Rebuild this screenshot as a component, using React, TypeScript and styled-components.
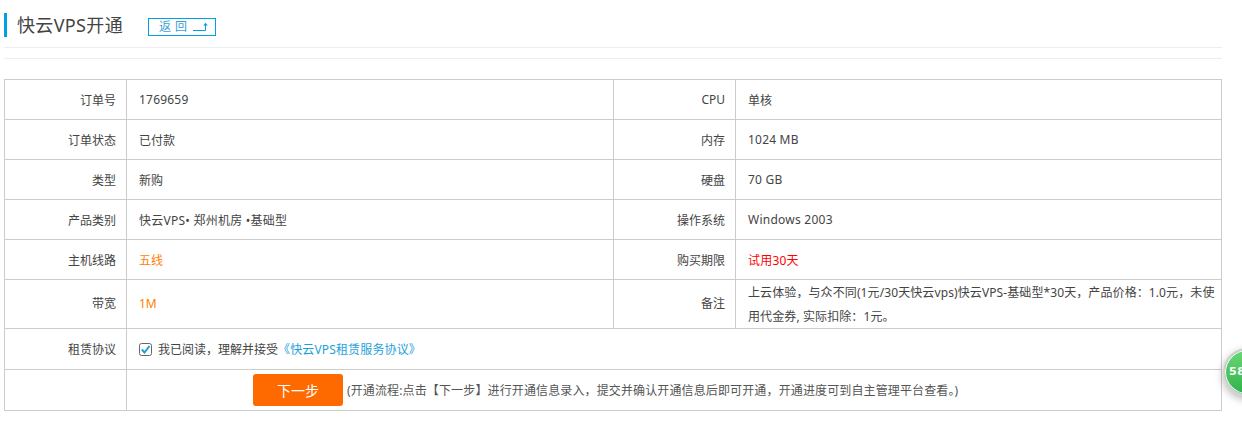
import React from "react";
import styled, { createGlobalStyle } from "styled-components";

const Global = createGlobalStyle`
  html, body { margin: 0; padding: 0; background: #fff; }
  body { font-family: "Noto Sans", "Noto Sans CJK SC", sans-serif; font-size: 12px; color: #444; overflow: hidden; }
`;

const Page = styled.div`
  position: relative;
  width: 1242px;
  height: 437px;
  overflow: hidden;
  padding: 13px 20px 0 4px;
  box-sizing: border-box;
`;

const Header = styled.div`
  display: flex;
  align-items: center;
  height: 24px;
  border-left: 3px solid #00a0e9;
  padding-left: 10px;
`;

const Title = styled.h1`
  margin: 0;
  font-size: 18px;
  font-weight: 400;
  line-height: 24px;
  color: #444;
  letter-spacing: 0.35px;
`;

const BackLink = styled.a`
  display: flex;
  align-items: center;
  box-sizing: border-box;
  width: 68px;
  height: 18px;
  margin: 3px 0 0 25px;
  padding-left: 10px;
  border: 1px solid #00a0e9;
  color: #3a9fd8;
  font-size: 12px;
  letter-spacing: 4px;
  line-height: 16px;
`;

const BackIcon = styled.svg`
  width: 16px;
  height: 10px;
  margin-left: 1px;
  flex: none;
`;

const Rule = styled.div<{ $top: number }>`
  height: 1px;
  background: #eee;
  margin-top: ${(p) => p.$top}px;
`;

const Table = styled.table`
  width: 1217px;
  margin-top: 20px;
  border-collapse: collapse;
  table-layout: fixed;
  border: 1px solid #ccc;
`;

const Row = styled.tr<{ $h: number }>`
  height: ${(p) => p.$h}px;
`;

const Label = styled.td<{ $lift?: boolean }>`
  box-sizing: border-box;
  border: 1px solid #ccc;
  text-align: right;
  padding: 0 10px ${(p) => (p.$lift ? 2 : 0)}px 0;
  color: #444;
`;

const Value = styled.td<{ $color?: string; $spacing?: number; $lift?: boolean }>`
  box-sizing: border-box;
  border: 1px solid #ccc;
  padding: 0 0 ${(p) => (p.$lift ? 2 : 0)}px 12px;
  color: ${(p) => p.$color ?? "#444"};
  letter-spacing: ${(p) => p.$spacing ?? 0}px;
`;

const Note = styled.div`
  line-height: 24px;
  padding: 1px 2px 0 0;
  margin-bottom: -1px;
  letter-spacing: 0.1px;
`;

const Agreement = styled.label`
  display: flex;
  align-items: center;
  gap: 6px;
`;

const Check = styled.svg`
  width: 13px;
  height: 13px;
  flex: none;
  margin-top: 1px;
`;

const Link = styled.a`
  color: #1e9fd8;
  letter-spacing: 0.15px;
`;

const ActionCell = styled.div`
  display: flex;
  align-items: center;
  padding-left: 114px;
`;

const NextButton = styled.button`
  width: 90px;
  height: 32px;
  border: 0;
  border-radius: 3px;
  background: #ff6a00;
  color: #fff;
  font: inherit;
  font-size: 14px;
  padding: 0;
`;

const Hint = styled.span`
  margin-left: 4px;
  color: #555;
  letter-spacing: 0.13px;
`;

const Bubble = styled.div`
  position: absolute;
  left: 1223px;
  top: 348px;
  width: 48px;
  height: 48px;
  box-sizing: border-box;
  border-radius: 50%;
  border: 2px solid #cfcfcf;
  background: linear-gradient(#6bd877, #2fb24a);
  box-shadow: inset 0 0 0 1px #fff, 0 3px 8px rgba(0, 0, 0, 0.3);
  color: #fff;
  font-family: "DejaVu Sans", sans-serif;
  font-weight: 700;
  font-size: 11px;
  line-height: 44px;
  padding-left: 4px;
  letter-spacing: 0.5px;
`;

export default function App() {
  return (
    <>
      <Global />
      <Page>
        <Header>
          <Title>快云VPS开通</Title>
          <BackLink>
            返回
            <BackIcon viewBox="0 0 16 10">
              <path d="M1 8.5H13.5V2" fill="none" stroke="#00a0e9" strokeWidth="1" />
              <path d="M11.2 3.5L13.5 0.8L15.8 3.5Z" fill="#00a0e9" />
            </BackIcon>
          </BackLink>
        </Header>
        <Rule $top={10} />
        <Rule $top={10} />
        <Table>
          <colgroup>
            <col style={{ width: 122 }} />
            <col style={{ width: 487 }} />
            <col style={{ width: 122 }} />
            <col style={{ width: 486 }} />
          </colgroup>
          <tbody>
            <Row $h={40}>
              <Label>订单号</Label>
              <Value $spacing={0.2}>1769659</Value>
              <Label>CPU</Label>
              <Value>单核</Value>
            </Row>
            <Row $h={40}>
              <Label>订单状态</Label>
              <Value>已付款</Value>
              <Label>内存</Label>
              <Value $spacing={0.2}>1024 MB</Value>
            </Row>
            <Row $h={40}>
              <Label>类型</Label>
              <Value>新购</Value>
              <Label>硬盘</Label>
              <Value $spacing={0.2}>70 GB</Value>
            </Row>
            <Row $h={40}>
              <Label>产品类别</Label>
              <Value $spacing={0.25}>快云VPS• 郑州机房 •基础型</Value>
              <Label>操作系统</Label>
              <Value $spacing={0.25}>Windows 2003</Value>
            </Row>
            <Row $h={40}>
              <Label>主机线路</Label>
              <Value $color="#ff7f00">五线</Value>
              <Label>购买期限</Label>
              <Value $color="#ff0000" $spacing={0.2}>试用30天</Value>
            </Row>
            <Row $h={49}>
              <Label $lift>带宽</Label>
              <Value $color="#ff7f00" $lift>1M</Value>
              <Label $lift>备注</Label>
              <Value>
                <Note>上云体验，与众不同(1元/30天快云vps)快云VPS-基础型*30天，产品价格：1.0元，未使用代金券, 实际扣除：1元。</Note>
              </Value>
            </Row>
            <Row $h={41}>
              <Label>租赁协议</Label>
              <Value colSpan={3}>
                <Agreement>
                  <Check viewBox="0 0 13 13">
                    <rect x="0.5" y="0.5" width="12" height="12" rx="2" fill="#fff" stroke="#666" />
                    <path d="M2.8 6.5L5.5 9.5L10.5 3" fill="none" stroke="#1e9fd8" strokeWidth="2" />
                  </Check>
                  <span>
                    我已阅读，理解并接受
                    <Link>《快云VPS租赁服务协议》</Link>
                  </span>
                </Agreement>
              </Value>
            </Row>
            <Row $h={41}>
              <Label />
              <Value colSpan={3}>
                <ActionCell>
                  <NextButton>下一步</NextButton>
                  <Hint>(开通流程:点击【下一步】进行开通信息录入，提交并确认开通信息后即可开通，开通进度可到自主管理平台查看。)</Hint>
                </ActionCell>
              </Value>
            </Row>
          </tbody>
        </Table>
        <Bubble>58</Bubble>
      </Page>
    </>
  );
}
